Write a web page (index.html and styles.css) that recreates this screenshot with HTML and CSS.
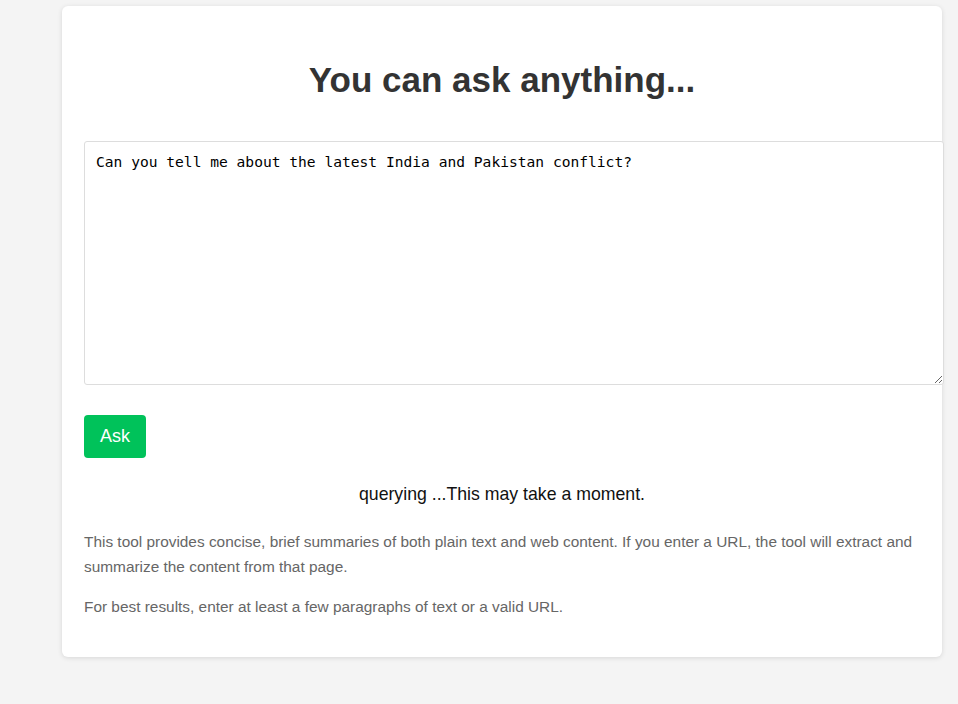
FILE: index.html
```html
<!DOCTYPE html>
<html>
<head>
<meta charset="utf-8">
<link rel="stylesheet" href="styles.css">
</head>
<body>
<div class="page">
  <div class="card">
    <h1 class="title">You can ask anything...</h1>
    <textarea class="query">Can you tell me about the latest India and Pakistan conflict?</textarea>
    <button class="ask">Ask</button>
    <div class="status">querying ...This may take a moment.</div>
    <p class="info">This tool provides concise, brief summaries of both plain text and web content. If you enter a URL, the tool will extract and summarize the content from that page.</p>
    <p class="info">For best results, enter at least a few paragraphs of text or a valid URL.</p>
  </div>
</div>
</body>
</html>
```
FILE: styles.css
```css
html, body {
  margin: 0;
  padding: 0;
  background: #f4f4f4;
  font-family: "Liberation Sans", Arial, sans-serif;
}
.page {
  padding: 6px 16px 40px 62px;
}
.card {
  width: 836px;
  background: #fff;
  border-radius: 6px;
  box-shadow: 0 1px 5px rgba(0,0,0,0.12);
  padding: 22px 22px 38px 22px;
}
.title {
  margin: 32px 0 41px 0;
  font-size: 35px;
  line-height: 40px;
  font-weight: bold;
  color: #333;
  text-align: center;
}
.query {
  display: block;
  width: 836px;
  height: 220px;
  margin: 0;
  padding: 11px;
  border: 1px solid #ddd;
  border-radius: 3px;
  font-family: "DejaVu Sans Mono", monospace;
  font-size: 14.6px;
  line-height: 17px;
  color: #000;
  background: #fff;
  resize: vertical;
}
.ask {
  display: block;
  margin-top: 30px;
  padding: 0 16px;
  height: 43px;
  border: none;
  border-radius: 4px;
  background: #00c25a;
  color: #fff;
  font-family: "Liberation Sans", Arial, sans-serif;
  font-size: 18px;
}
.status {
  margin-top: 25px;
  text-align: center;
  font-size: 17.7px;
  line-height: 22px;
  color: #111;
}
.info {
  margin: 15px 0 0 0;
  font-size: 15.4px;
  line-height: 25px;
  color: #666;
}
.status + .info {
  margin-top: 24px;
}
```
